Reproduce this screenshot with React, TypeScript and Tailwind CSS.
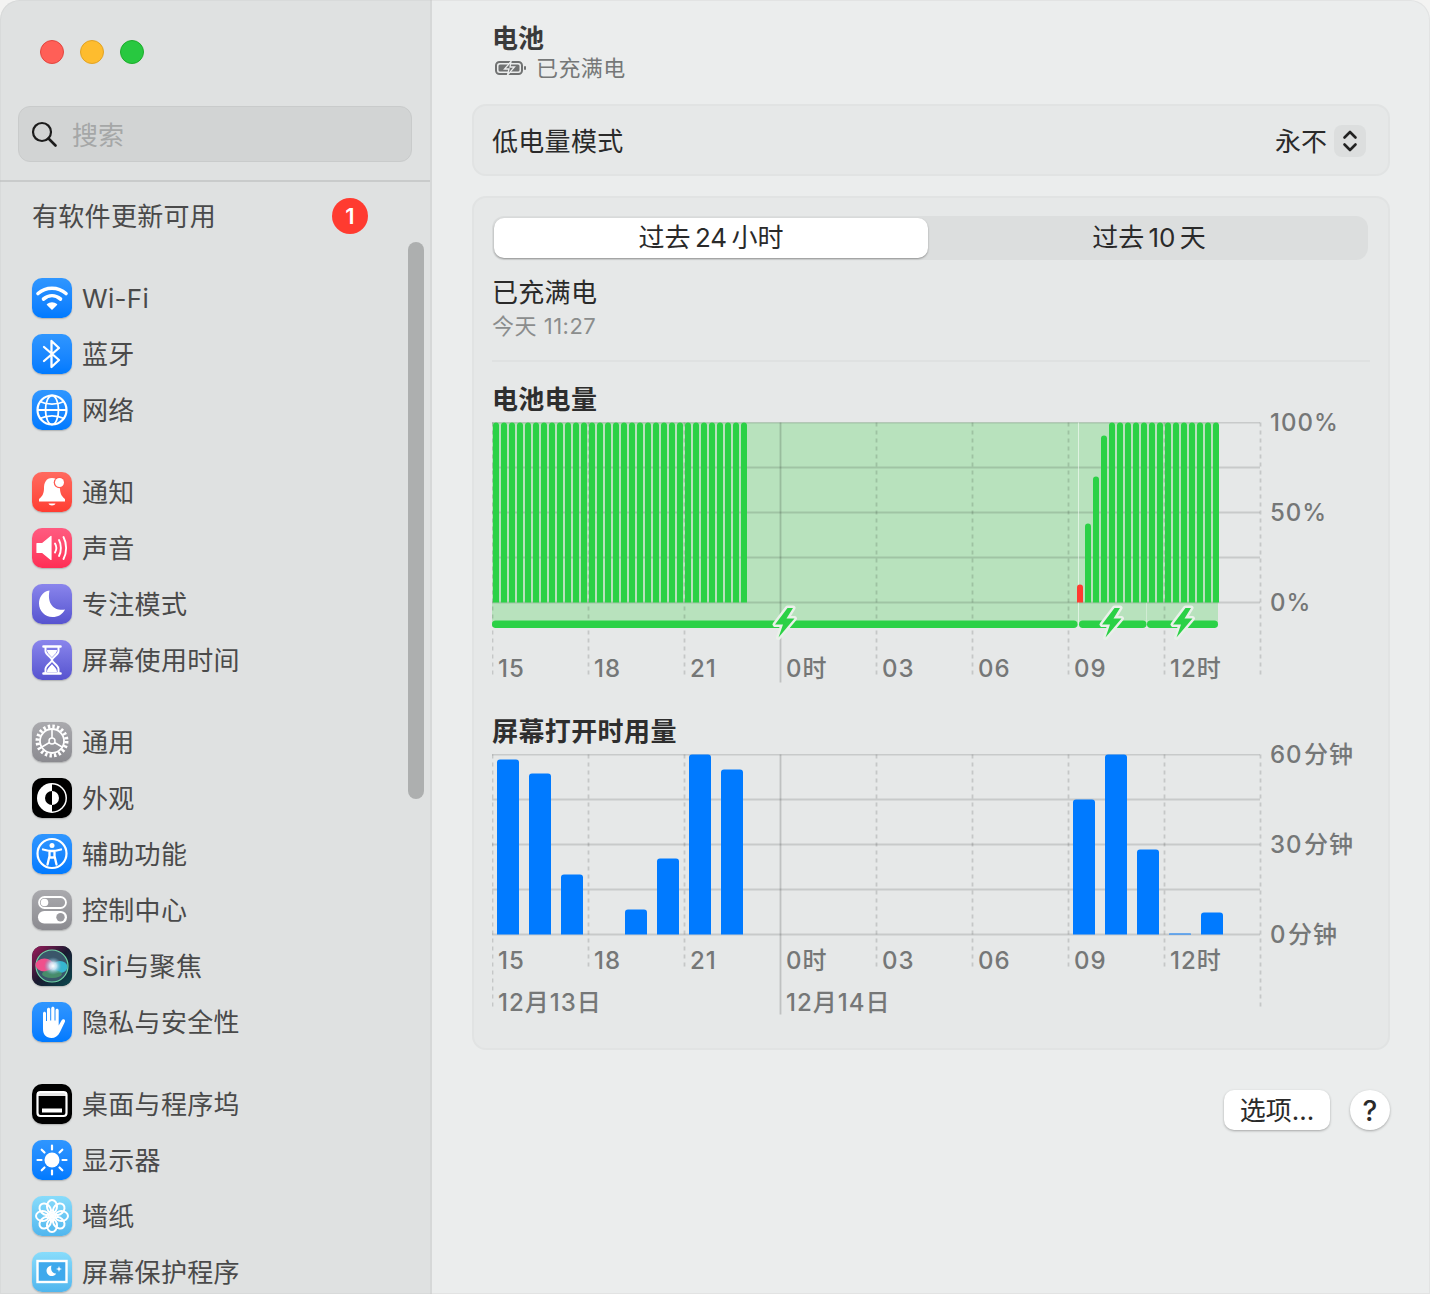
import type { ReactNode } from 'react';

const FONT = 'Inter, "Noto Sans CJK SC", sans-serif';
const GREEN = '#2bd146';
const HOURS = ['15', '18', '21', '0时', '03', '06', '09', '12时'];
const VLINES = [492, 588, 684, 780, 876, 972, 1068, 1164, 1260];

function Tile({ className, children }: { className: string; children: ReactNode }) {
  return (
    <div className={`w-10 h-10 shrink-0 rounded-[10px] overflow-hidden shadow-[0_1px_1.5px_rgba(0,0,0,0.22)] ${className}`}>
      <svg viewBox="0 0 40 40" className="w-10 h-10 block">{children}</svg>
    </div>
  );
}

const BLUE = 'bg-gradient-to-b from-[#2f96ff] to-[#007aff]';
const RED = 'bg-gradient-to-b from-[#ff6a5f] to-[#ff3b30]';
const PINK = 'bg-gradient-to-b from-[#ff5a80] to-[#ff2d55]';
const INDIGO = 'bg-gradient-to-b from-[#8a85ec] to-[#5753cf]';
const GRAY = 'bg-gradient-to-b from-[#aaaaae] to-[#8b8b90]';
const SKY = 'bg-gradient-to-b from-[#88dcfb] to-[#50b6ee]';

const icons: Record<string, ReactNode> = {
  wifi: (
    <Tile className={BLUE}>
      <g fill="none" stroke="#fff" strokeLinecap="round">
        <path d="M6 15.5C14 8.5 26 8.5 34 15.5" strokeWidth="3.6" />
        <path d="M11.5 21C16.8 16.6 23.2 16.6 28.5 21" strokeWidth="3.6" />
      </g>
      <path d="M15.5 26.5C18 24.4 22 24.4 24.5 26.5L20 31Z" fill="#fff" stroke="#fff" strokeLinejoin="round" strokeWidth="1.5" />
    </Tile>
  ),
  bluetooth: (
    <Tile className={BLUE}>
      <path d="M12 13L27 26L19.5 33V7L27 14L12 27" fill="none" stroke="#fff" strokeWidth="2.3" strokeLinejoin="round" strokeLinecap="round" />
    </Tile>
  ),
  globe: (
    <Tile className={BLUE}>
      <g fill="none" stroke="#fff" strokeWidth="1.8">
        <circle cx="20" cy="20" r="14.5" strokeWidth="2.2" />
        <ellipse cx="20" cy="20" rx="6.5" ry="14.5" />
        <path d="M5.5 20H34.5M8 11.5C15 15 25 15 32 11.5M8 28.5C15 25 25 25 32 28.5" />
      </g>
    </Tile>
  ),
  bell: (
    <Tile className={RED}>
      <path d="M20 6C14 6 12 11 12 16C12 21.5 10.5 24 7 27V29.5H33V27C29.5 24 28 21.5 28 16C28 11 26 6 20 6Z" fill="#fff" />
      <path d="M16.5 31.5H23.5C23 34 17 34 16.5 31.5Z" fill="#fff" />
      <circle cx="27.5" cy="10.5" r="5.8" fill="#ff5a50" />
      <circle cx="27.5" cy="10.5" r="4.5" fill="#fff" />
    </Tile>
  ),
  sound: (
    <Tile className={PINK}>
      <path d="M5 15.5H10.5L19 8.5V31.5L10.5 24.5H5Z" fill="#fff" stroke="#fff" strokeWidth="1.2" strokeLinejoin="round" />
      <g fill="none" stroke="#fff" strokeWidth="1.9" strokeLinecap="round">
        <path d="M23 15.5C24.5 18 24.5 22 23 24.5" />
        <path d="M27 12C29.5 16.5 29.5 23.5 27 28" />
        <path d="M31.5 9C35 15.5 35 24.5 31.5 31" />
      </g>
    </Tile>
  ),
  moon: (
    <Tile className={INDIGO}>
      <path d="M17.5 6.5C10.5 7.5 7 13.5 7 19.5C7 27 13 33 20.5 33C26 33 30.5 30.5 33 25.5C24 27.5 14.5 21.5 17.5 6.5Z" fill="#fff" />
    </Tile>
  ),
  hourglass: (
    <Tile className={INDIGO}>
      <g fill="none" stroke="#fff" strokeLinecap="round">
        <path d="M11.5 6.5H28.5M11.5 33.5H28.5" strokeWidth="2.6" />
        <path d="M13.5 7V11C13.5 15 20 17.5 20 20C20 22.5 13.5 25 13.5 29V33M26.5 7V11C26.5 15 20 17.5 20 20C20 22.5 26.5 25 26.5 29V33" strokeWidth="2" />
      </g>
      <path d="M15 10H25C25 13.5 21 15.5 20 17.5C19 15.5 15 13.5 15 10ZM15 32C15 28 19 26 20 24C21 26 25 28 25 32Z" fill="#fff" />
    </Tile>
  ),
  gear: (
    <Tile className={GRAY}>
      <circle cx="20" cy="19" r="14.5" fill="none" stroke="#fff" strokeWidth="4" strokeDasharray="2.4 2.15" />
      <circle cx="20" cy="19" r="12" fill="none" stroke="#fff" strokeWidth="1.8" />
      <circle cx="20" cy="19" r="3" fill="none" stroke="#fff" strokeWidth="1.5" />
      <path d="M22.5 20.5L31 25.5M17.5 20.5L9 25.5M20 16V7" stroke="#fff" strokeWidth="1.6" />
    </Tile>
  ),
  appearance: (
    <Tile className="bg-black">
      <circle cx="20" cy="20" r="15" fill="#fff" />
      <path d="M20 6.5A13.5 13.5 0 0 1 20 33.5Z" fill="#000" />
      <path d="M20 13A7 7 0 0 0 20 27Z" fill="#000" />
      <path d="M20 13A7 7 0 0 1 20 27Z" fill="#fff" />
    </Tile>
  ),
  accessibility: (
    <Tile className={BLUE}>
      <circle cx="20" cy="19.5" r="14.5" fill="none" stroke="#fff" strokeWidth="2.2" />
      <circle cx="20" cy="11.5" r="2.5" fill="#fff" />
      <path d="M11 15.5L17.5 17V22L15.5 30.5M29 15.5L22.5 17V22L24.5 30.5M17.5 17H22.5M18 23.5H22" fill="none" stroke="#fff" strokeWidth="2.3" strokeLinecap="round" strokeLinejoin="round" />
    </Tile>
  ),
  toggles: (
    <Tile className={GRAY}>
      <rect x="7" y="7" width="27" height="11" rx="5.5" fill="none" stroke="#fff" strokeWidth="1.8" />
      <circle cx="12.5" cy="12.5" r="3.8" fill="#fff" />
      <rect x="6" y="21" width="29" height="12.5" rx="6.2" fill="#fff" />
      <circle cx="28.5" cy="27.2" r="4.2" fill="#9a9a9f" />
    </Tile>
  ),
  siri: (
    <Tile className="bg-[#14232c]">
      <defs>
        <radialGradient id="siri-a" cx="0.5" cy="0.5" r="0.5">
          <stop offset="0" stopColor="#ffffff" />
          <stop offset="0.4" stopColor="#cfe6f5" stopOpacity="0.9" />
          <stop offset="1" stopColor="#6aa8c8" stopOpacity="0" />
        </radialGradient>
        <linearGradient id="siri-bg" x1="0" y1="0" x2="1" y2="1">
          <stop offset="0" stopColor="#a01a5c" />
          <stop offset="0.5" stopColor="#1a1a30" />
          <stop offset="1" stopColor="#0a4a50" />
        </linearGradient>
      </defs>
      <rect width="40" height="40" fill="url(#siri-bg)" />
      <circle cx="20" cy="20" r="16" fill="#3a566a" stroke="#6fd6a6" strokeWidth="1.2" />
      <ellipse cx="12.5" cy="19" rx="9" ry="6.5" fill="#f0508c" />
      <ellipse cx="28" cy="21" rx="7.5" ry="6" fill="#36b6cf" />
      <ellipse cx="20" cy="28" rx="10" ry="4" fill="#4b9a6c" opacity="0.8" />
      <circle cx="21" cy="20" r="9" fill="url(#siri-a)" />
    </Tile>
  ),
  hand: (
    <Tile className={BLUE}>
      <path d="M11 11.5C11 9 14 9 14 11.5V19H15V7.5C15 5 18.2 5 18.2 7.5V18.5H19.2V6.5C19.2 4 22.5 4 22.5 6.5V18.5H23.5V8.5C23.5 6 26.7 6 26.7 8.5V23.5L29.5 18.5C31 16 34 17.5 32.8 20L28 30C26 34 23 36 19.5 36C14 36 11 32.5 11 27Z" fill="#fff" />
    </Tile>
  ),
  dock: (
    <Tile className="bg-black">
      <rect x="5.5" y="8" width="29" height="24" rx="3" fill="none" stroke="#fff" strokeWidth="2.2" />
      <rect x="5.5" y="8" width="29" height="4" fill="#fff" opacity="0.9" />
      <rect x="10" y="24.5" width="20" height="4" fill="#fff" />
    </Tile>
  ),
  sun: (
    <Tile className={BLUE}>
      <circle cx="20" cy="20" r="7.5" fill="#fff" />
      <g stroke="#fff" strokeWidth="2.2" strokeLinecap="round">
        <path d="M20 5.5V9.5M20 30.5V34.5M5.5 20H9.5M30.5 20H34.5M9.7 9.7L12.5 12.5M27.5 27.5L30.3 30.3M9.7 30.3L12.5 27.5M27.5 12.5L30.3 9.7" />
      </g>
    </Tile>
  ),
  flower: (
    <Tile className={SKY}>
      <g fill="none" stroke="#fff" strokeWidth="2">
        {[0, 45, 90, 135, 180, 225, 270, 315].map((r) => (
          <ellipse key={r} cx="20" cy="10.5" rx="5" ry="6.5" transform={`rotate(${r} 20 20)`} />
        ))}
      </g>
      <circle cx="20" cy="20" r="2.5" fill="#fff" />
    </Tile>
  ),
  saver: (
    <Tile className={SKY}>
      <rect x="5.5" y="9" width="29" height="21" fill="#3fa9ec" stroke="#fff" strokeWidth="2.4" />
      <path d="M19.5 13.5C16 14 14.5 16.5 14.5 18.5C14.5 22 17.5 24.5 20.5 24C22 24 23.5 23 24.2 21.5C21 22 18 18.5 19.5 13.5Z" fill="#fff" />
      <path d="M27 14L27.8 16.2L30 17L27.8 17.8L27 20L26.2 17.8L24 17L26.2 16.2Z" fill="#fff" />
    </Tile>
  ),
};

const groups: { icon: string; label: string }[][] = [
  [
    { icon: 'wifi', label: 'Wi-Fi' },
    { icon: 'bluetooth', label: '蓝牙' },
    { icon: 'globe', label: '网络' },
  ],
  [
    { icon: 'bell', label: '通知' },
    { icon: 'sound', label: '声音' },
    { icon: 'moon', label: '专注模式' },
    { icon: 'hourglass', label: '屏幕使用时间' },
  ],
  [
    { icon: 'gear', label: '通用' },
    { icon: 'appearance', label: '外观' },
    { icon: 'accessibility', label: '辅助功能' },
    { icon: 'toggles', label: '控制中心' },
    { icon: 'siri', label: 'Siri 与聚焦' },
    { icon: 'hand', label: '隐私与安全性' },
  ],
  [
    { icon: 'dock', label: '桌面与程序坞' },
    { icon: 'sun', label: '显示器' },
    { icon: 'flower', label: '墙纸' },
    { icon: 'saver', label: '屏幕保护程序' },
  ],
];

function Sidebar() {
  return (
    <aside className="relative w-[432px] shrink-0 h-full bg-[#dfe1e1] border-r-2 border-[#d6d8d8] overflow-hidden">
      <div className="flex gap-4 pl-10 pt-10">
        <span className="w-6 h-6 rounded-full bg-[#ff5f57] border border-[#e2463f]" />
        <span className="w-6 h-6 rounded-full bg-[#febc2e] border border-[#e1a325]" />
        <span className="w-6 h-6 rounded-full bg-[#28c840] border border-[#1dad2b]" />
      </div>
      <div className="mx-[18px] mt-[42px] h-14 w-[394px] rounded-xl bg-[#d2d4d4] border border-[#c9cbcb] flex items-center pl-3 gap-[15px]">
        <svg viewBox="0 0 26 26" className="w-[26px] h-[26px] shrink-0" fill="none" stroke="#1c1c1c" strokeWidth="2.2" strokeLinecap="round">
          <circle cx="11" cy="11" r="9" />
          <path d="M17.5 17.5L24.5 24.5" strokeWidth="2.6" />
        </svg>
        <span className="text-[26px] text-[#a5a7a7] translate-y-px">搜索</span>
      </div>
      <div className="mt-[18px] h-[2px] w-[430px] bg-[#c9cbcb]" />
      <div className="flex items-center h-[68px] pl-8 relative">
        <span className="text-[26px] tracking-[0.3px] text-[#4a4a4a]">有软件更新可用</span>
        <span className="absolute left-[332px] top-4 w-9 h-9 rounded-full bg-[#ff3b30] text-white text-[22px] font-semibold flex items-center justify-center">1</span>
      </div>
      <div className="flex flex-col gap-[42px] pt-7 pl-8">
        {groups.map((group, i) => (
          <div key={i} className="flex flex-col gap-4">
            {group.map((item) => (
              <div key={item.label} className="flex items-center gap-[10px] h-10">
                {icons[item.icon]}
                <span className="text-[26px] tracking-[0.3px] [word-spacing:-7px] text-[#4a4a4a] whitespace-nowrap">{item.label}</span>
              </div>
            ))}
          </div>
        ))}
      </div>
      <div className="absolute left-[408px] top-[242px] w-4 h-[557px] rounded-full bg-[#adafaf]" />
    </aside>
  );
}

function Bolt({ x }: { x: number }) {
  return (
    <path
      transform={`translate(${x} 0)`}
      d="M4 -14.5L-8.5 2H-0.5L-5 15L11 -4H3L9.5 -14.5Z"
      fill={GREEN}
      stroke="#eaf0ea"
      strokeWidth="5"
      strokeLinejoin="round"
      paintOrder="stroke"
    />
  );
}

function AxisText({ x, y, children }: { x: number; y: number; children: ReactNode }) {
  return (
    <text x={x} y={y} fontSize="24" fontWeight="500" letterSpacing="1" fill="#757777" dominantBaseline="central" fontFamily={FONT}>
      {children}
    </text>
  );
}

function Grid({ shortDash }: { shortDash: boolean }) {
  return (
    <>
      {[0, 45, 90, 135, 180].map((y) => (
        <line key={y} x1="0" x2="768" y1={y} y2={y} stroke="#000" strokeOpacity="0.13" strokeWidth="1.8" />
      ))}
      {VLINES.map((page) => {
        const x = page - 492 + 0.5;
        if (page === 780) return <line key={page} x1={x} x2={x} y1="0" y2="260" stroke="#000" strokeOpacity="0.17" strokeWidth="1.8" />;
        const end = shortDash && page !== 492 && page !== 1260 ? 216 : 256;
        return <line key={page} x1={x} x2={x} y1="0" y2={end} stroke="#000" strokeOpacity="0.14" strokeWidth="1.8" strokeDasharray="4 4" />;
      })}
    </>
  );
}

function BatteryChart() {
  const left = Array.from({ length: 32 }, (_, i) => 1 + 8 * i);
  const right = [
    { x: 585, top: 162, red: true },
    { x: 593, top: 101 },
    { x: 601, top: 54 },
    { x: 609, top: 13 },
    ...Array.from({ length: 14 }, (_, i) => ({ x: 617 + 8 * i, top: 0 })),
  ];
  return (
    <svg width="880" height="262" viewBox="0 0 880 262" className="block">
      <g transform="translate(0 0.5)">
        <rect x="0" y="0" width="726" height="204" fill="#b8e2bd" />
        <Grid shortDash={false} />
        <line x1="586.5" x2="586.5" y1="0" y2="204" stroke="#fff" strokeOpacity="0.55" />
        <line x1="654.5" x2="654.5" y1="180" y2="204" stroke="#fff" strokeOpacity="0.35" />
        {left.map((x) => (
          <path key={x} d={`M${x} 180V3a3 3 0 0 1 6 0V180Z`} fill={GREEN} />
        ))}
        {right.map((b) => (
          <path key={b.x} d={`M${b.x} 180V${b.top + 3}a3 3 0 0 1 6 0V180Z`} fill={b.red ? '#ff3b30' : GREEN} />
        ))}
        <rect x="0" y="198" width="585.5" height="7.5" rx="3.7" fill={GREEN} />
        <rect x="587" y="198" width="67.5" height="7.5" rx="3.7" fill={GREEN} />
        <rect x="655" y="198" width="71" height="7.5" rx="3.7" fill={GREEN} />
        <g transform="translate(0 200)">
          <Bolt x={291.5} />
          <Bolt x={618.5} />
          <Bolt x={689.5} />
        </g>
      </g>
      {HOURS.map((h, i) => (
        <AxisText key={h} x={6 + 96 * i} y={246}>{h}</AxisText>
      ))}
    </svg>
  );
}

function UsageChart() {
  const bars: [number, number][] = [
    [0, 5], [1, 19], [2, 120], [4, 155], [5, 104], [6, 0], [7, 15],
    [18, 45], [19, 0], [20, 95], [21, 179], [22, 158],
  ];
  return (
    <svg width="880" height="262" viewBox="0 0 880 262" className="block">
      <g transform="translate(0 0.5)">
        <Grid shortDash />
        {bars.map(([i, top]) => {
          const x = 5 + 32 * i;
          const r = top > 170 ? 0.5 : 3;
          return (
            <path key={i} d={`M${x} 180V${top + r}a${r} ${r} 0 0 1 ${r} -${r}H${x + 22 - r}a${r} ${r} 0 0 1 ${r} ${r}V180Z`} fill="#007aff" />
          );
        })}
      </g>
      {HOURS.map((h, i) => (
        <AxisText key={h} x={6 + 96 * i} y={206}>{h}</AxisText>
      ))}
      <AxisText x={6} y={248}>12月13日</AxisText>
      <AxisText x={294} y={248}>12月14日</AxisText>
    </svg>
  );
}

function YLabels({ labels }: { labels: string[] }) {
  return (
    <div className="absolute left-[778px] top-[-15px] flex flex-col gap-[58px]">
      {labels.map((l) => (
        <span key={l} className="text-[24px] font-medium leading-8 tracking-[1px] [word-spacing:-6px] text-[#757777] whitespace-nowrap">{l}</span>
      ))}
    </div>
  );
}

export default function App() {
  return (
    <div className="relative w-[1430px] h-[1294px] bg-[#f3f3f2] overflow-hidden" style={{ fontFamily: FONT }}>
      <div className="flex w-full h-full rounded-t-[20px] overflow-hidden bg-[#ebeded]">
        <Sidebar />
        <main className="flex-1 pl-10 pr-10 text-[#2a2a2a]">
          <div className="pl-5 pt-[22px] h-[104px]">
            <div className="text-[26px] leading-[34px] font-semibold text-[#3a3a3a]">电池</div>
            <div className="flex items-center gap-[9px] -mt-[3px] h-[30px]">
              <svg viewBox="0 0 32 16" className="w-8 h-4 ml-[3px]">
                <rect x="1" y="2" width="26" height="12" rx="3.5" fill="none" stroke="#707272" strokeWidth="2" />
                <rect x="3.5" y="4.5" width="21" height="7" rx="1.5" fill="#707272" />
                <path d="M16 1.5L9.5 9H14L12.5 15L19.5 7H15Z" fill="#707272" stroke="#ebeded" strokeWidth="1.3" />
                <rect x="29" y="6" width="2" height="4" rx="1" fill="#707272" />
              </svg>
              <span className="text-[22px] tracking-[0.4px] text-[#767878]">已充满电</span>
            </div>
          </div>

          <section className="h-[72px] rounded-[14px] bg-[#e6e8e8] border-2 border-[#e1e3e3] flex items-center pl-[18px] pr-[22px]">
            <span className="text-[26px] tracking-[0.3px] translate-y-px">低电量模式</span>
            <span className="ml-auto text-[26px] translate-y-px">永不</span>
            <span className="ml-[7px] w-8 h-8 rounded-lg bg-[#dcdede] flex items-center justify-center translate-y-px">
              <svg viewBox="0 0 16 24" className="w-4 h-6" fill="none" stroke="#222" strokeWidth="2.6" strokeLinecap="round" strokeLinejoin="round">
                <path d="M2.5 8.5L8 3L13.5 8.5M2.5 15.5L8 21L13.5 15.5" />
              </svg>
            </span>
          </section>

          <section className="mt-5 h-[854px] rounded-[14px] bg-[#e6e8e8] border-2 border-[#e1e3e3] pl-[18px] pt-[18px]">
            <div className="w-[876px] h-11 rounded-xl bg-[#dcdede] flex p-[2px]">
              <div className="w-[434px] h-10 rounded-[10px] bg-white shadow-[0_1px_2px_rgba(0,0,0,0.35)] flex items-center justify-center text-[26px] [word-spacing:-3px]"><span className="-translate-y-px">过去 24 小时</span></div>
              <div className="flex-1 flex items-center justify-center text-[26px] [word-spacing:-3px] pl-1"><span className="-translate-y-px">过去 10 天</span></div>
            </div>
            <div className="mt-4 text-[26px] leading-[34px] tracking-[0.3px]">已充满电</div>
            <div className="text-[22px] leading-8 tracking-[0.5px] text-[#8b8d8d]">今天 11:27</div>
            <div className="mt-[18px] w-[878px] h-[2px] bg-[#dfe1e1]" />
            <div className="mt-[21px] text-[26px] leading-[34px] tracking-[0.3px] font-semibold text-[#2e2e2e]">电池电量</div>
            <div className="relative mt-[5px]">
              <BatteryChart />
              <YLabels labels={['100%', '50%', '0%']} />
            </div>
            <div className="mt-[31px] text-[26px] leading-[34px] tracking-[0.4px] font-semibold text-[#2e2e2e]">屏幕打开时用量</div>
            <div className="relative mt-[5px]">
              <UsageChart />
              <YLabels labels={['60 分钟', '30 分钟', '0 分钟']} />
            </div>
          </section>

          <div className="flex justify-end items-center gap-5 mt-10">
            <button className="w-[106px] h-10 rounded-[10px] bg-white shadow-[0_1px_2.5px_rgba(0,0,0,0.3)] text-[26px] text-[#2a2a2a]">选项...</button>
            <button className="w-10 h-10 rounded-full bg-white shadow-[0_1px_2.5px_rgba(0,0,0,0.3)] text-[28px] font-medium text-[#2a2a2a]">?</button>
          </div>
        </main>
      </div>
      <div className="absolute inset-0 rounded-t-[20px] pointer-events-none shadow-[inset_0_0_0_1px_rgba(190,190,190,0.2)]" />
    </div>
  );
}
